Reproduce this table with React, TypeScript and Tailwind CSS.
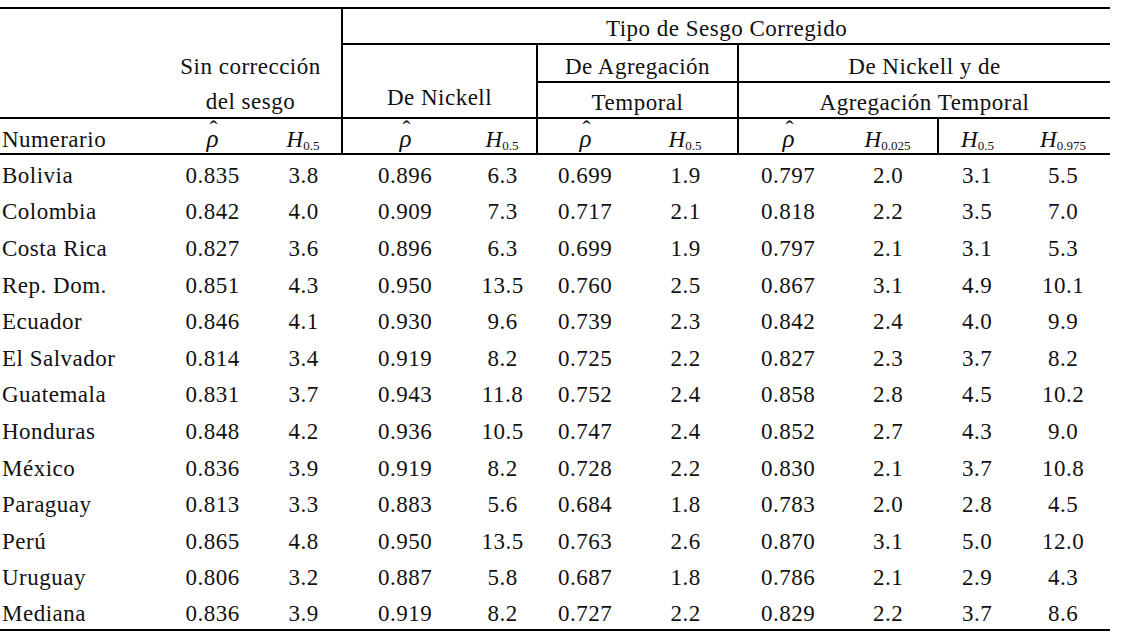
const rows: string[][] = [
  ["Bolivia", "0.835", "3.8", "0.896", "6.3", "0.699", "1.9", "0.797", "2.0", "3.1", "5.5"],
  ["Colombia", "0.842", "4.0", "0.909", "7.3", "0.717", "2.1", "0.818", "2.2", "3.5", "7.0"],
  ["Costa Rica", "0.827", "3.6", "0.896", "6.3", "0.699", "1.9", "0.797", "2.1", "3.1", "5.3"],
  ["Rep. Dom.", "0.851", "4.3", "0.950", "13.5", "0.760", "2.5", "0.867", "3.1", "4.9", "10.1"],
  ["Ecuador", "0.846", "4.1", "0.930", "9.6", "0.739", "2.3", "0.842", "2.4", "4.0", "9.9"],
  ["El Salvador", "0.814", "3.4", "0.919", "8.2", "0.725", "2.2", "0.827", "2.3", "3.7", "8.2"],
  ["Guatemala", "0.831", "3.7", "0.943", "11.8", "0.752", "2.4", "0.858", "2.8", "4.5", "10.2"],
  ["Honduras", "0.848", "4.2", "0.936", "10.5", "0.747", "2.4", "0.852", "2.7", "4.3", "9.0"],
  ["México", "0.836", "3.9", "0.919", "8.2", "0.728", "2.2", "0.830", "2.1", "3.7", "10.8"],
  ["Paraguay", "0.813", "3.3", "0.883", "5.6", "0.684", "1.8", "0.783", "2.0", "2.8", "4.5"],
  ["Perú", "0.865", "4.8", "0.950", "13.5", "0.763", "2.6", "0.870", "3.1", "5.0", "12.0"],
  ["Uruguay", "0.806", "3.2", "0.887", "5.8", "0.687", "1.8", "0.786", "2.1", "2.9", "4.3"],
  ["Mediana", "0.836", "3.9", "0.919", "8.2", "0.727", "2.2", "0.829", "2.2", "3.7", "8.6"],
]

const widths = [160, 105, 77, 126, 69, 96, 105, 100, 100, 78, 94]

// rho with a hat on top
const Rho = () => (
  <span className="relative inline-block italic text-[25px] leading-none tracking-normal">
    ρ
    <span className="absolute left-[3px] top-[-9px] not-italic text-[24px]">ˆ</span>
  </span>
)

const H = ({ sub }: { sub: string }) => (
  <span className="whitespace-nowrap tracking-normal">
    <span className="italic text-[23px]">H</span>
    <span className="text-[13px] relative top-[3px]">{sub}</span>
  </span>
)

export default function App() {
  return (
    <div className="w-[1123px] h-[638px] bg-white pt-[7px] text-[#111]" style={{ fontFamily: '"Liberation Serif", "Times New Roman", serif' }}>
      <table className="w-[1110px] border-collapse table-fixed text-[23px] tracking-[0.5px] leading-none">
        <colgroup>
          {widths.map((w, i) => (
            <col key={i} style={{ width: w }} />
          ))}
        </colgroup>
        <thead>
          <tr className="h-[36px] border-t-2 border-black">
            <th colSpan={3}></th>
            <th colSpan={8} className="font-normal text-center border-l-2 border-b-2 border-black pt-[4px]">
              Tipo de Sesgo Corregido
            </th>
          </tr>
          <tr className="h-[38px]">
            <th></th>
            <th colSpan={2} className="font-normal text-center pt-[6px]">Sin corrección</th>
            <th colSpan={2} rowSpan={2} className="font-normal text-center align-bottom pb-[8px] border-l-2 border-r-2 border-black">
              De Nickell
            </th>
            <th colSpan={2} className="font-normal text-center border-b-2 border-r-2 border-black pt-[6px]">De Agregación</th>
            <th colSpan={4} className="font-normal text-center border-b-2 border-black pt-[6px]">De Nickell y de</th>
          </tr>
          <tr className="h-[36px] border-b-2 border-black">
            <th></th>
            <th colSpan={2} className="font-normal text-center pt-[4px]">del sesgo</th>
            <th colSpan={2} className="font-normal text-center border-r-2 border-black pt-[4px]">Temporal</th>
            <th colSpan={4} className="font-normal text-center pt-[4px]">Agregación Temporal</th>
          </tr>
          <tr className="h-[36px] border-b-2 border-black">
            <th className="font-normal text-left pl-[2px] pt-[6px]">Numerario</th>
            <th className="font-normal text-center pt-[4px]"><Rho /></th>
            <th className="font-normal text-center pt-[6px] border-r-2 border-black"><H sub="0.5" /></th>
            <th className="font-normal text-center pt-[4px]"><Rho /></th>
            <th className="font-normal text-center pt-[6px] border-r-2 border-black"><H sub="0.5" /></th>
            <th className="font-normal text-center pt-[4px]"><Rho /></th>
            <th className="font-normal text-center pt-[6px] border-r-2 border-black"><H sub="0.5" /></th>
            <th className="font-normal text-center pt-[4px]"><Rho /></th>
            <th className="font-normal text-center pt-[6px] border-r-2 border-black"><H sub="0.025" /></th>
            <th className="font-normal text-center pt-[6px]"><H sub="0.5" /></th>
            <th className="font-normal text-center pt-[6px]"><H sub="0.975" /></th>
          </tr>
        </thead>
        <tbody className="border-b-2 border-black">
          {rows.map((r, i) => (
            <tr key={i} className="h-[36.6px]">
              {r.map((c, j) => (
                <td key={j} className={j === 0 ? "text-left pl-[2px] pt-[6px]" : "text-center pt-[6px]"}>
                  {c}
                </td>
              ))}
            </tr>
          ))}
        </tbody>
      </table>
    </div>
  )
}
